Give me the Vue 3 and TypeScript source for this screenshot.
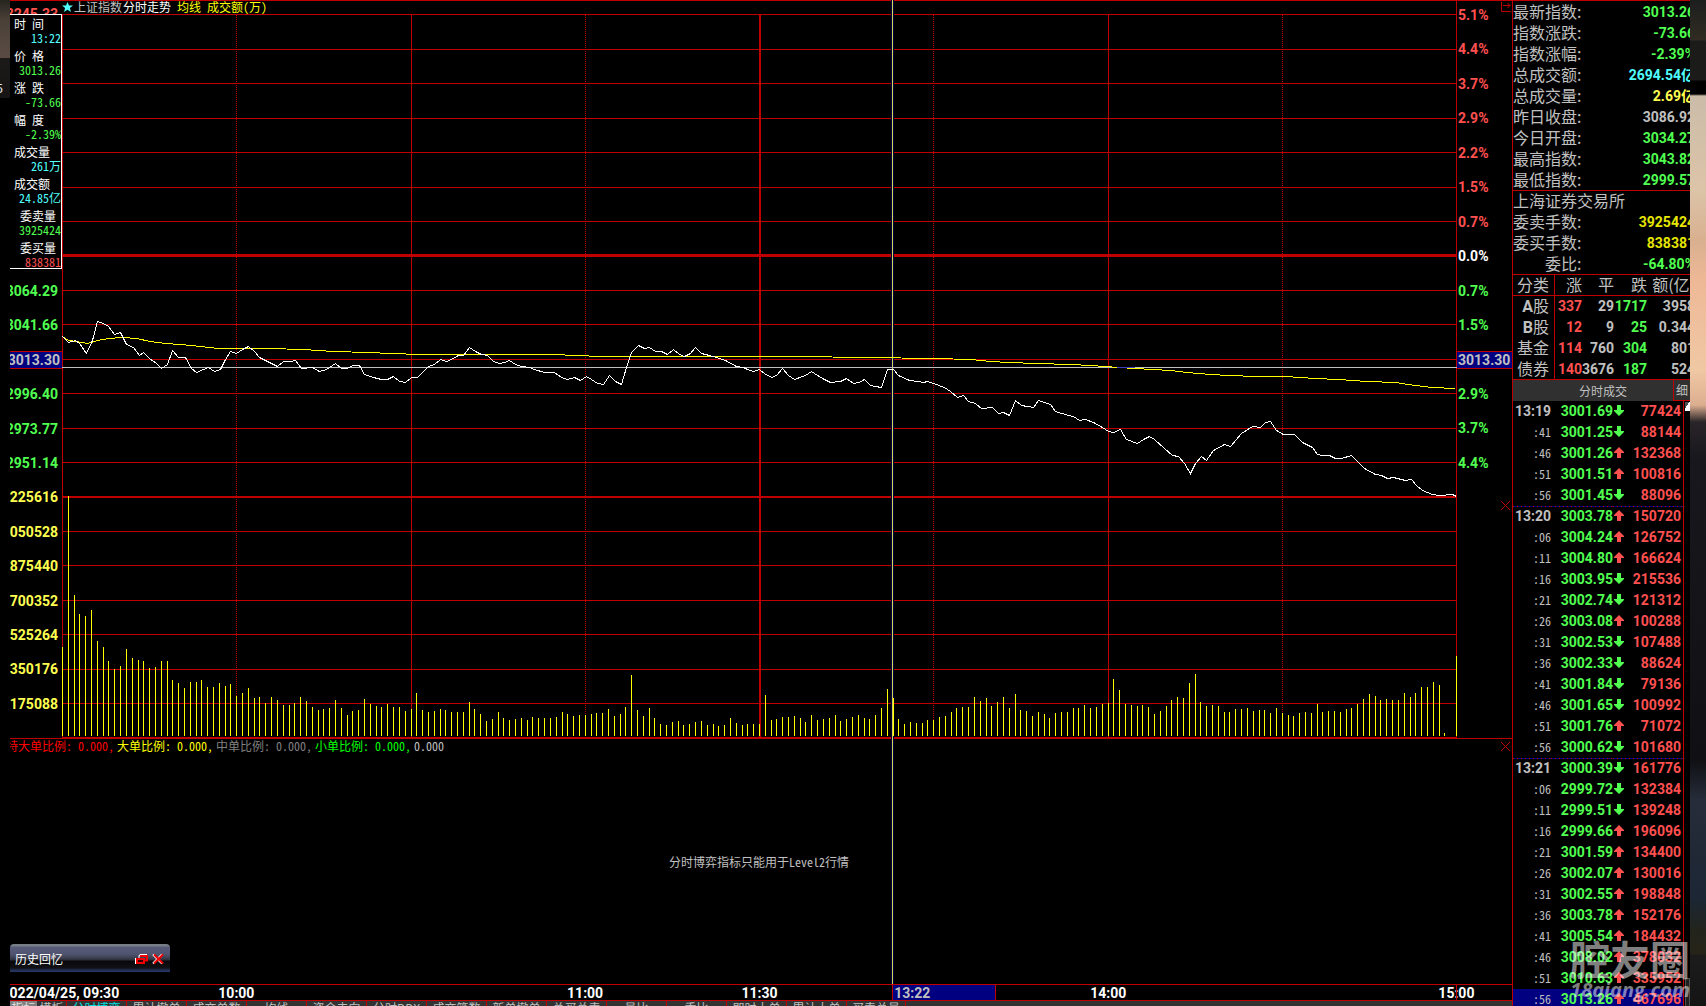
<script setup lang="ts">
type Tone = 'up' | 'down' | 'flat' | 'cyan' | 'yellow' | 'amber' | 'white' | 'mark'

interface Labelled {
  label: string
  value: string
  tone: Tone
}

const cursorRows: Labelled[] = [
  { label: '时\u2002间', value: '13:22', tone: 'cyan' },
  { label: '价\u2002格', value: '3013.26', tone: 'down' },
  { label: '涨\u2002跌', value: '-73.66', tone: 'down' },
  { label: '幅\u2002度', value: '-2.39%', tone: 'down' },
  { label: '成交量', value: '261万', tone: 'cyan' },
  { label: '成交额', value: '24.85亿', tone: 'cyan' },
  { label: '\u2002委卖量', value: '3925424', tone: 'down' },
  { label: '\u2002委买量', value: '838381', tone: 'up' },
]

const leftAxis: { text: string; tone: Tone }[] = [
  { text: '3064.29', tone: 'down' },
  { text: '3041.66', tone: 'down' },
  { text: '3013.30', tone: 'mark' },
  { text: '2996.40', tone: 'down' },
  { text: '2973.77', tone: 'down' },
  { text: '2951.14', tone: 'down' },
  { text: '225616', tone: 'yellow' },
  { text: '050528', tone: 'yellow' },
  { text: '875440', tone: 'yellow' },
  { text: '700352', tone: 'yellow' },
  { text: '525264', tone: 'yellow' },
  { text: '350176', tone: 'yellow' },
  { text: '175088', tone: 'yellow' },
]

const rightAxis: { text: string; tone: Tone }[] = [
  { text: '5.1%', tone: 'up' },
  { text: '4.4%', tone: 'up' },
  { text: '3.7%', tone: 'up' },
  { text: '2.9%', tone: 'up' },
  { text: '2.2%', tone: 'up' },
  { text: '1.5%', tone: 'up' },
  { text: '0.7%', tone: 'up' },
  { text: '0.0%', tone: 'white' },
  { text: '0.7%', tone: 'down' },
  { text: '1.5%', tone: 'down' },
  { text: '3013.30', tone: 'mark' },
  { text: '2.9%', tone: 'down' },
  { text: '3.7%', tone: 'down' },
  { text: '4.4%', tone: 'down' },
]

const timeTicks = [
  { text: '10:00', column: 'tick-1' },
  { text: '11:00', column: 'tick-3' },
  { text: '11:30', column: 'tick-4' },
  { text: '14:00', column: 'tick-6' },
  { text: '15:00', column: 'tick-8' },
]

const ratios = [
  { name: '特大单比例:', value: '0.000,', css: 'ratio-huge' },
  { name: '大单比例:', value: '0.000,', css: 'ratio-large' },
  { name: '中单比例:', value: '0.000,', css: 'ratio-mid' },
  { name: '小单比例:', value: '0.000,', css: 'ratio-small' },
]

const tabs = [
  '分时博弈', '累计撤单', '成交单数', '均线', '资金去向', '分时DDX', '成交笔数',
  '新单撤单', '总买总卖', '量比', '委比', '即时大单', '累计大单', '买卖总量',
]

const quotes: Labelled[] = [
  { label: '最新指数:', value: '3013.26', tone: 'down' },
  { label: '指数涨跌:', value: '-73.66', tone: 'down' },
  { label: '指数涨幅:', value: '-2.39%', tone: 'down' },
  { label: '总成交额:', value: '2694.54亿', tone: 'cyan' },
  { label: '总成交量:', value: '2.69亿', tone: 'yellow' },
  { label: '昨日收盘:', value: '3086.92', tone: 'flat' },
  { label: '今日开盘:', value: '3034.27', tone: 'down' },
  { label: '最高指数:', value: '3043.82', tone: 'down' },
  { label: '最低指数:', value: '2999.57', tone: 'down' },
]

const orders: Labelled[] = [
  { label: '委卖手数:', value: '3925424', tone: 'amber' },
  { label: '委买手数:', value: '838381', tone: 'amber' },
  { label: '\u3000\u3000委比:', value: '-64.80%', tone: 'down' },
]

const categories = [
  { mark: 'A', name: '股', up: '337', even: '29', down: '1717', amount: '3958' },
  { mark: 'B', name: '股', up: '12', even: '9', down: '25', amount: '0.344' },
  { mark: '', name: '基金', up: '114', even: '760', down: '304', amount: '801' },
  { mark: '', name: '债券', up: '140', even: '3676', down: '187', amount: '524' },
]

type Trade = [time: string, price: string, rising: 0 | 1, volume: string]
const trades: Trade[] = [
  ['13:19', '3001.69', 0, '77424'],
  [':41', '3001.25', 0, '88144'],
  [':46', '3001.26', 1, '132368'],
  [':51', '3001.51', 1, '100816'],
  [':56', '3001.45', 0, '88096'],
  ['13:20', '3003.78', 1, '150720'],
  [':06', '3004.24', 1, '126752'],
  [':11', '3004.80', 1, '166624'],
  [':16', '3003.95', 0, '215536'],
  [':21', '3002.74', 0, '121312'],
  [':26', '3003.08', 1, '100288'],
  [':31', '3002.53', 0, '107488'],
  [':36', '3002.33', 0, '88624'],
  [':41', '3001.84', 0, '79136'],
  [':46', '3001.65', 0, '100992'],
  [':51', '3001.76', 1, '71072'],
  [':56', '3000.62', 0, '101680'],
  ['13:21', '3000.39', 0, '161776'],
  [':06', '2999.72', 0, '132384'],
  [':11', '2999.51', 0, '139248'],
  [':16', '2999.66', 1, '196096'],
  [':21', '3001.59', 1, '134400'],
  [':26', '3002.07', 1, '130016'],
  [':31', '3002.55', 1, '198848'],
  [':36', '3003.78', 1, '152176'],
  [':41', '3005.54', 1, '184432'],
  [':46', '3008.02', 1, '378032'],
  [':51', '3010.63', 1, '335952'],
  [':56', '3013.26', 1, '467696'],
]
const startsMinute = (index: number) => index > 0 && trades[index][0].length > 3

/* Plot geometry, in viewBox units */
const PLOT_LEFT = 62
const PLOT_RIGHT = 1456
const MINUTES = 240
const xAt = (minute: number) => Math.round(PLOT_LEFT + ((PLOT_RIGHT - PLOT_LEFT) * minute) / MINUTES)

const rows = [
  14, 49, 83, 118, 152, 187, 221, 290, 324, 359, 393, 428, 462,
  531, 565, 600, 634, 669, 703,
]
const dottedColumns = [236, 585, 933, 1282]

const cursorMinute = 143
const cursorShare = cursorMinute / MINUTES
const cursorX = 892

/* Bar height for every minute of the session */
const volumes = [
  89, 240, 141, 122, 120, 126, 95, 89, 75, 67, 70, 87, 78, 76, 75, 68, 69, 75, 75, 56,
  53, 48, 54, 54, 56, 49, 49, 53, 50, 52, 40, 43, 48, 38, 39, 33, 39, 36, 31, 31,
  33, 39, 35, 29, 26, 27, 28, 36, 28, 21, 25, 26, 37, 32, 30, 29, 32, 29, 29, 25,
  27, 43, 26, 24, 25, 27, 26, 24, 24, 24, 34, 27, 22, 15, 17, 24, 18, 16, 17, 18,
  16, 19, 18, 18, 18, 19, 24, 22, 20, 21, 21, 22, 23, 23, 27, 20, 22, 29, 61, 26,
  20, 28, 18, 12, 11, 14, 15, 11, 12, 14, 15, 11, 12, 10, 11, 18, 13, 11, 12, 12,
  12, 41, 16, 17, 19, 19, 20, 18, 14, 21, 16, 17, 18, 21, 15, 17, 19, 21, 18, 17,
  21, 28, 47, 38, 17, 12, 14, 13, 13, 16, 16, 19, 20, 24, 28, 29, 29, 39, 35, 38,
  30, 34, 39, 28, 42, 26, 25, 20, 24, 22, 18, 23, 24, 24, 28, 28, 31, 28, 29, 32,
  33, 57, 46, 32, 31, 30, 31, 29, 22, 25, 30, 36, 39, 38, 53, 62, 34, 30, 31, 30,
  24, 24, 27, 27, 28, 25, 26, 26, 23, 28, 23, 21, 20, 23, 24, 23, 32, 24, 25, 25,
  24, 27, 28, 32, 37, 42, 40, 36, 37, 36, 36, 43, 39, 43, 49, 49, 54, 51, 3, 0, 80,
]

const priceLine = [
  '62,336 68,342 75,340 79,343 86,353 92,340 97,321 103,323 108,326 114,334 120,332 126,344 133,347',
  '139,355 143,352 149,358 156,363 161,368 167,364 172,350 178,357 185,357 191,368 196,372 203,369',
  '208,367 214,371 220,369 225,359 230,351 236,353 242,349 248,346 254,351 259,357 265,360 277,366',
  '283,361 290,361 295,360 301,368 312,367 319,371 326,369 335,363 341,368 347,368 352,365 359,365',
  '364,374 373,377 381,379 387,379 393,376 399,381 405,382 411,377 417,377 428,366 434,364 440,359',
  '446,361 451,359 458,355 463,355 469,347 475,351 481,354 487,355 493,361 499,363 504,362 509,360',
  '515,364 521,366 529,367 534,369 544,372 554,372 561,377 567,379 574,377 580,380 586,376 591,379',
  '597,383 603,384 609,375 615,381 621,384 626,367 631,352 638,345 644,348 649,347 655,351 661,351',
  '667,354 673,349 679,354 684,356 690,353 695,347 701,353 709,355 716,357 725,360 736,366 743,367',
  '747,369 753,371 759,369 765,374 772,377 777,374 782,368 788,375 794,379 805,375 811,371 817,375',
  '824,379 830,382 840,381 846,378 853,383 859,382 864,379 870,385 875,386 881,387 887,369 893,369',
  '898,375 909,380 917,381 923,382 927,381 933,383 944,387 950,391 957,397 963,395 968,401 975,403',
  '981,408 992,407 998,413 1003,412 1009,415 1015,400 1021,405 1033,407 1038,400 1050,404 1055,411',
  '1068,415 1073,416 1079,420 1085,419 1093,422 1102,427 1108,431 1113,432 1120,429 1126,439',
  '1137,443 1143,439 1149,436 1154,439 1172,455 1178,456 1184,463 1190,473 1195,463 1201,456',
  '1206,460 1213,450 1224,444 1230,446 1241,433 1252,426 1260,427 1265,422 1270,421 1276,430',
  '1283,434 1294,434 1302,442 1312,447 1317,454 1322,455 1329,455 1335,458 1341,458 1351,455',
  '1364,468 1375,474 1381,475 1387,478 1393,477 1405,480 1411,479 1416,485 1422,490 1432,494',
  '1439,495 1452,494 1456,496',
].join(' ')

const averageLine = [
  '62,336 68,340 76,341 87,343 97,340 108,338 122,337 136,338 150,341 165,343 180,344 200,346',
  '218,348 268,348 303,349 333,351 368,352 390,353 420,354 553,354 600,356 797,356 866,357',
  '935,358 970,359 990,361 1008,362 1036,363 1070,364 1090,365 1105,366 1117,367 1135,368',
  '1152,369 1170,370 1187,372 1210,374 1228,375 1256,376 1285,376 1315,378 1338,379 1367,381',
  '1395,382 1407,384 1432,387 1455,388',
].join(' ')
</script>

<template>
  <div class="desk">
    <div class="edge-left"><span>5</span></div>

    <main class="board">
      <section class="chart">
        <svg class="plot" viewBox="62 0 1395 984" preserveAspectRatio="none" aria-hidden="true">
          <g fill="#c00000">
            <rect x="62" y="0" width="1395" height="1" />
            <rect v-for="y in rows" :key="y" x="62" :y="y" width="1395" height="1" />
            <rect x="62" y="254" width="1395" height="3" />
            <rect x="62" y="496" width="1395" height="2" />
            <rect x="62" y="737" width="1395" height="2" />
            <rect x="62" y="14" width="1" height="724" />
            <rect x="411" y="14" width="1" height="724" />
            <rect x="759" y="14" width="2" height="724" />
            <rect x="1108" y="14" width="1" height="724" />
            <rect x="1456" y="0" width="1" height="738" />
          </g>
          <g stroke="#c00000" stroke-dasharray="1 1">
            <line v-for="x in dottedColumns" :key="x" :x1="x + 0.5" y1="15" :x2="x + 0.5" y2="738" />
          </g>
          <rect :x="cursorX - 1" y="0" width="3" height="984" fill="#000040" />
          <g fill="#ffff00">
            <rect
              v-for="(h, minute) in volumes"
              :key="minute"
              :x="xAt(minute)"
              :y="736 - h"
              width="1"
              :height="h"
            />
          </g>
          <rect :x="cursorX" y="0" width="1" height="984" fill="#d4d454" />
          <rect x="62" y="367" width="1395" height="1" fill="#c0c0c0" />
          <g fill="none" shape-rendering="crispEdges" transform="translate(0.5 0.5)">
            <polyline :points="averageLine" stroke="#ffff00" />
            <polyline :points="priceLine" stroke="#ffffff" />
          </g>
          <rect x="1117" y="367" width="18" height="1" fill="#3f3fbf" />
        </svg>

        <div class="axis axis-left">
          <div class="left-head"><span>3245.33</span></div>
          <div class="axis-labels left-labels">
            <span v-for="(item, i) in leftAxis" :key="i" :class="item.tone">{{ item.text }}</span>
          </div>
          <div class="left-gap"></div>
          <div class="axis-foot"></div>
        </div>

        <div class="axis axis-right">
          <div class="right-head"></div>
          <div class="axis-labels right-labels">
            <span v-for="(item, i) in rightAxis" :key="i" :class="item.tone">{{ item.text }}</span>
          </div>
          <div class="right-gap">
            <button class="cross" type="button" aria-label="关闭成交额">
              <svg viewBox="0 0 9 9"><path d="M0 0L9 9M9 0L0 9" /></svg>
            </button>
          </div>
          <div class="axis-foot">
            <button class="cross" type="button" aria-label="关闭分时博弈">
              <svg viewBox="0 0 9 9"><path d="M0 0L9 9M9 0L0 9" /></svg>
            </button>
          </div>
        </div>

        <div class="captions">
          <div class="upper">
            <h1 class="caption">
              <svg class="star" viewBox="0 0 12 12" aria-hidden="true">
                <path d="M5.500 1L7 4.500H11L7.900 7L9 11L5.500 8.700L2 11L3.100 7L0 4.500H4z" />
              </svg>
              <span class="flat">上证指数</span>
              <span class="white">分时走势</span>
              <span class="legend">均线</span>
              <span class="legend">成交额(万)</span>
            </h1>
          </div>
          <div class="lower">
            <div class="ratios">
              <span v-for="r in ratios" :key="r.name" :class="r.css">{{ r.name }}&ensp;{{ r.value }}</span>
              <span class="flat">0.000</span>
            </div>
            <p class="notice">分时博弈指标只能用于Level2行情</p>
          </div>
        </div>

        <aside class="cursor-info">
          <dl>
            <div v-for="row in cursorRows" :key="row.label">
              <dt>{{ row.label }}</dt>
              <dd :class="row.tone">{{ row.value }}</dd>
            </div>
          </dl>
        </aside>

        <button class="fold" type="button" aria-label="展开侧栏">
          <svg viewBox="0 0 10 10"><path d="M0.500 0V9.500H10M2 3.500H9M6.500 1L9 3.500L6.500 6" /></svg>
        </button>

        <div class="memory">
          <span>历史回忆</span>
          <button type="button" aria-label="还原">
            <svg viewBox="0 0 14 12">
              <path d="M4 5V2.500H5V1.500H12" fill="none" stroke="#fff" />
              <path d="M5 3H12V7.500H10" fill="none" stroke="#f00000" stroke-width="2" />
              <rect x="2" y="6" width="7" height="4" fill="#300000" stroke="#f00000" stroke-width="2" />
              <path d="M0.500 11V5" fill="none" stroke="#fff" />
            </svg>
          </button>
          <button type="button" aria-label="关闭">
            <svg viewBox="0 0 14 12">
              <path d="M2 1.500L11 10.500M11 1.500L2 10.500" stroke="#fff" stroke-width="2" />
              <path d="M3 1.500L12 10.500M12 1.500L3 10.500" stroke="#f00000" stroke-width="2" />
            </svg>
          </button>
        </div>
      </section>

      <div class="times">
        <span class="date">2022/04/25, 09:30</span>
        <span v-for="t in timeTicks" :key="t.text" :class="['tick', t.column]">{{ t.text }}</span>
        <span class="edge-line"></span>
        <span class="cursor-time" :style="{ '--share': cursorShare }">13:22</span>
      </div>

      <nav class="tabs">
        <button type="button" class="mode mode-on">指标</button>
        <button type="button" class="mode">模板</button>
        <button v-for="(tab, i) in tabs" :key="tab" type="button" :class="['tab', { on: i === 0 }]">
          {{ tab }}
        </button>
      </nav>
    </main>

    <aside class="side">
      <dl class="block quotes">
        <div v-for="q in quotes" :key="q.label" class="pair">
          <dt>{{ q.label }}</dt>
          <dd :class="q.tone">{{ q.value }}</dd>
        </div>
      </dl>

      <div class="block">
        <h2>上海证券交易所</h2>
        <dl>
          <div v-for="q in orders" :key="q.label" class="pair">
            <dt>{{ q.label }}</dt>
            <dd :class="q.tone">{{ q.value }}</dd>
          </div>
        </dl>
      </div>

      <table class="categories">
        <thead>
          <tr>
            <th class="c-name">分类</th>
            <th class="c-up">涨</th>
            <th class="c-even">平</th>
            <th class="c-down">跌</th>
            <th class="c-amount">额(亿)</th>
          </tr>
        </thead>
        <tbody>
          <tr v-for="(c, i) in categories" :key="i">
            <th><b>{{ c.mark }}</b>{{ c.name }}</th>
            <td class="up">{{ c.up }}</td>
            <td class="flat">{{ c.even }}</td>
            <td class="down">{{ c.down }}</td>
            <td class="flat">{{ c.amount }}</td>
          </tr>
        </tbody>
      </table>

      <div class="side-tabs">
        <button type="button" class="side-main">分时成交</button>
        <button type="button" class="side-more">细</button>
      </div>

      <div class="tape">
        <table class="trades">
          <tbody>
            <tr
              v-for="(t, i) in trades"
              :key="i"
              :class="{ minute: startsMinute(i), current: i === trades.length - 1 }"
            >
              <td :class="t[0].length > 3 ? 't-full' : 't-sec'">{{ t[0] }}</td>
              <td class="t-price down">{{ t[1] }}</td>
              <td class="t-arrow">
                <svg v-if="t[2]" class="rise" viewBox="0 0 10 11"><path d="M5 0L10 5V6H7V11H3V6H0V5z" /></svg>
                <svg v-else class="fall" viewBox="0 0 10 11"><path d="M5 11L10 6V5H7V0H3V5H0V6z" /></svg>
              </td>
              <td class="t-volume up">{{ t[3] }}</td>
            </tr>
          </tbody>
        </table>
        <div class="scroll">
          <button type="button" aria-label="向上滚动"></button>
          <i></i>
        </div>
      </div>

      <div class="stamp">
        <strong>腔友圈</strong>
        <em>18qiang.com</em>
      </div>
    </aside>

    <div class="edge-right"></div>
  </div>
</template>

<style>
body {
  margin: 0;
  background: #000;
}
</style>

<style scoped>
.desk {
  display: grid;
  grid-template-columns: 10px minmax(0, 1fr) 178px 16px;
  height: 100vh;
  overflow: hidden;
  background: #000;
  color: #c0c0c0;
  font-family: "Noto Sans CJK SC", sans-serif;
  font-size: 12px;
  line-height: 14px;
}

dl,
dd,
h1,
h2,
p {
  margin: 0;
}

h1,
h2,
th {
  font-weight: 400;
}

button {
  margin: 0;
  padding: 0;
  border: 0;
  background: none;
  color: inherit;
  font: inherit;
}

svg {
  display: block;
}

.up { color: #ff5050; }
.down { color: #50ff50; }
.flat { color: #c0c0c0; }
.cyan { color: #50ffff; }
.yellow { color: #ffff50; }
.amber { color: #e6e600; }
.white { color: #fff; }
.legend { color: #ffff00; }

.edge-left {
  overflow: hidden;
  background: linear-gradient(#26241f 0, #4a4038 20px, #5a4c44 58px, #1b1a18 58px, #161514 98px, #000 98px);
}

.edge-left span {
  display: flex;
  justify-content: flex-end;
  width: 3px;
  margin-top: 81px;
  color: #e8e8e8;
}

.edge-right {
  background: linear-gradient(
    #1c1e1e 0, #302c22 40px, #1b1b19 41px, #1b1b19 80px, #000 81px, #000 94px,
    #cbbca8 96px, #dcc4a8 190px, #d8b090 240px, #eeb896 280px, #f0c8a4 370px,
    #dcae90 405px, #2a2428 422px, #17171d 460px, #101014 760px, #262c3a 800px,
    #1c2634 900px, #22241c 930px, #262418 954px, #1c1c1c 955px, #141414 100%
  );
}

.board {
  display: flex;
  flex-direction: column;
  min-width: 0;
  overflow: hidden;
}

.chart {
  position: relative;
  display: grid;
  flex: 1;
  grid-template-columns: 52px minmax(0, 1fr) 55px;
  grid-template-rows: minmax(0, 1fr);
  min-height: 0;
}

.plot {
  grid-area: 1 / 2;
  width: 100%;
  height: 100%;
}

.axis {
  display: flex;
  flex-direction: column;
  overflow: hidden;
  box-shadow: inset 0 1px #c00000;
  font-family: Roboto, sans-serif;
  font-size: 14px;
  font-weight: 700;
  line-height: 18px;
}

.axis-left { grid-area: 1 / 1; }
.axis-right { grid-area: 1 / 3; }

.left-head {
  flex: 282 0 0;
  display: flex;
  align-items: flex-start;
  justify-content: flex-end;
  color: #ff5050;
}

.left-head span {
  margin: 5px 4px 0 0;
}

.axis-labels {
  display: flex;
  flex-direction: column;
  justify-content: space-between;
}

.left-labels {
  flex: 431 0 0;
  align-items: flex-end;
}

.left-labels span { padding-right: 4px; }
.left-gap { flex: 25 0 0; }

.right-head { flex: 6 0 0; }
.right-labels { flex: 466 0 0; }
.right-labels span { padding-left: 1px; }
.right-gap { flex: 266 0 0; }

.axis-labels .mark {
  align-self: stretch;
  box-sizing: border-box;
  border: solid #c00000;
  border-width: 1px 0;
  background: #000080;
  color: #c0c0c0;
  line-height: 16px;
}

.left-labels .mark {
  display: flex;
  justify-content: flex-end;
  padding-right: 2px;
}

.axis-foot {
  flex: 246 0 0;
  box-shadow: inset 0 1px #c00000;
}

.cross {
  display: block;
  width: 9px;
  height: 9px;
  margin-left: 44px;
}

.right-gap .cross { margin-top: 29px; }
.axis-foot .cross { margin-top: 4px; }

.cross svg,
.fold svg {
  width: 100%;
  height: 100%;
  fill: none;
  stroke: #c00000;
}

.captions {
  grid-area: 1 / 1 / 2 / 4;
  display: flex;
  flex-direction: column;
  overflow: hidden;
  font-feature-settings: "hwid";
}

.upper { flex: 739 0 0; }

.lower {
  flex: 245 0 0;
  display: flex;
  flex-direction: column;
}

.caption {
  display: flex;
  align-items: center;
  height: 14px;
  padding-left: 52px;
  font-size: 12px;
  line-height: 14px;
}

.star {
  width: 12px;
  height: 12px;
  fill: #50ffff;
}

.caption .white { margin-left: 1px; }
.caption .legend { margin-left: 6px; }

.ratios {
  display: flex;
  gap: 3px;
  margin-left: -4px;
  white-space: nowrap;
}

.ratio-huge { color: #ff0000; }
.ratio-large { color: #ffff00; }
.ratio-mid { color: #808080; }
.ratio-small { color: #00ff00; }

.notice {
  display: flex;
  flex: 1;
  align-items: center;
  justify-content: center;
  padding: 0 56px 14px 52px;
}

.cursor-info {
  position: absolute;
  top: 14px;
  left: 0;
  box-sizing: border-box;
  width: 52px;
  border: solid #fff;
  border-width: 1px 1px 1px 0;
  background: #000;
  overflow: hidden;
  font-feature-settings: "hwid";
}

.cursor-info dl {
  display: flex;
  flex-direction: column;
  gap: 4px;
  margin-bottom: -1px;
  padding-top: 2px;
}

.cursor-info dt {
  padding-left: 4px;
  color: #fff;
  white-space: pre;
}

.cursor-info dd {
  display: flex;
  justify-content: flex-end;
}

.fold {
  position: absolute;
  top: 2px;
  right: 1px;
  width: 10px;
  height: 10px;
}

.memory {
  position: absolute;
  bottom: 12px;
  left: 0;
  display: flex;
  align-items: center;
  gap: 2px;
  box-sizing: border-box;
  width: 160px;
  height: 28px;
  padding: 2px 5px 0;
  border-radius: 4px 4px 0 0;
  background: linear-gradient(
    #787e88 0, #787e88 2px, #585c78 3px, #505470 10px, #3c4050 14px, #2c2e38 16px,
    #08080a 17px, #121216 24px, #202c50 26px, #283c68 28px
  );
  color: #fff;
}

.memory span { flex: 1; }

.memory svg {
  width: 14px;
  height: 12px;
}

.times {
  position: relative;
  display: grid;
  grid-template-columns: 52px repeat(16, minmax(0, 1fr)) 55px;
  flex: none;
  box-sizing: border-box;
  height: 17px;
  border: solid #c00000;
  border-width: 1px 0;
  color: #fff;
  font-family: Roboto, sans-serif;
  font-size: 14px;
  font-weight: 700;
  line-height: 16px;
  white-space: nowrap;
}

.date {
  display: flex;
  grid-area: 1 / 1 / 2 / 3;
  justify-content: flex-end;
  padding-right: 30px;
}

.tick {
  grid-row: 1;
  text-align: center;
}

.tick-1 { grid-column: 3 / 5; }
.tick-3 { grid-column: 7 / 9; }
.tick-4 { grid-column: 9 / 11; }
.tick-6 { grid-column: 13 / 15; }

.tick-8 {
  grid-column: 17 / 19;
  padding-left: 31px;
}

.edge-line {
  grid-area: 1 / 18;
  width: 1px;
  margin-left: -1px;
  background: #c00000;
}

.cursor-time {
  position: absolute;
  top: 0;
  left: calc(51px + (100% - 107px) * var(--share));
  box-sizing: border-box;
  width: 104px;
  height: 15px;
  padding-left: 1px;
  border: solid #c00000;
  border-width: 0 1px;
  background: #000080;
  color: #c0c0c0;
}

.tabs {
  display: flex;
  flex: 0 0 5px;
  overflow: hidden;
  background: #333;
}

.tabs button {
  box-sizing: border-box;
  height: 14px;
  line-height: 14px;
}

.tab {
  width: 60px;
  border-left: 1px solid #c00000;
}

.tab:last-child { border-right: 1px solid #c00000; }

.tab.on { color: #00e0e0; }

.mode { width: 29px; }

.mode-on {
  width: 27px;
  background: #808080;
  color: #e0e0e0;
}

.side {
  position: relative;
  box-sizing: border-box;
  border-left: 1px solid #c00000;
  overflow: hidden;
}

.block {
  box-shadow: inset 0 -1px #c00000;
}

.quotes {
  box-sizing: border-box;
  padding-top: 1px;
  border-top: 1px solid #c00000;
}

.pair {
  display: flex;
  justify-content: space-between;
  height: 21px;
  margin-right: -5px;
}

h2 { height: 21px; }

.pair dt,
h2,
.categories th {
  font-size: 16px;
  font-weight: 400;
  line-height: 19px;
  white-space: nowrap;
}

.pair dd,
.categories td,
.trades td {
  font-family: Roboto, "Noto Sans CJK SC", sans-serif;
  font-size: 14px;
  font-weight: 700;
  line-height: 21px;
  white-space: nowrap;
}

.categories,
.trades {
  table-layout: fixed;
  border-collapse: separate;
  border-spacing: 0;
}

.categories {
  width: 182px;
}

.categories th,
.categories td {
  height: 21px;
  padding: 0;
  text-align: right;
  vertical-align: top;
}

.categories b {
  font-family: Roboto, sans-serif;
}

.categories tr:last-child > * { box-shadow: inset 0 -1px #c00000; }

.categories th:first-child {
  box-sizing: border-box;
  padding-right: 5px;
  border-right: 1px solid #c00000;
}

.c-name { width: 42px; }
.c-up { width: 27px; }
.c-even { width: 32px; }
.c-down { width: 33px; }
.c-amount { width: 48px; }

.side-tabs {
  display: flex;
  height: 21px;
  background: #303030;
}

.side-main {
  flex: 1;
  padding-left: 20px;
}

.side-more {
  width: 17px;
  border: solid #c00000;
  border-width: 0 0 1px 1px;
}

.tape {
  display: flex;
}

.trades {
  flex: none;
  width: 171px;
  border-right: 1px solid #c00000;
}

.trades td {
  height: 21px;
  padding: 0;
  text-align: right;
  vertical-align: top;
}

.trades .t-full { width: 38px; }

.trades .t-sec {
  font-family: "Noto Sans CJK SC", sans-serif;
  font-size: 12px;
  font-weight: 400;
  line-height: 19px;
  font-feature-settings: "hwid";
}

.t-price { width: 62px; }
.t-arrow { width: 12px; }
.trades .t-volume { padding-right: 2px; }

.t-arrow svg {
  width: 10px;
  height: 11px;
  margin: 4px 0 0 1px;
}

.rise { fill: #ff5050; }
.fall { fill: #50ff50; }

.minute td {
  background: repeating-linear-gradient(90deg, #c00000 0, #c00000 1px, #000080 1px, #000080 4px) 0 0 / 100% 1px no-repeat;
}

.current td { background: #000080; }

.scroll {
  display: flex;
  flex: 1;
  flex-direction: column;
  justify-content: space-between;
  padding: 1px 0 0 1px;
}

.scroll button {
  height: 9px;
  background: linear-gradient(120deg, #505050 40%, #fff 40%);
}

.scroll i {
  height: 30px;
  border: 1px solid #505050;
  background: #202020;
}

.stamp {
  position: absolute;
  right: 0;
  bottom: 4px;
  display: flex;
  flex-direction: column;
  align-items: flex-end;
  color: rgba(255, 255, 255, 0.5);
  white-space: nowrap;
}

.stamp strong {
  font-size: 40px;
  font-weight: 700;
  line-height: 40px;
}

.stamp em {
  font-family: "Open Sans", sans-serif;
  font-size: 20px;
  font-weight: 700;
  line-height: 24px;
}
</style>
